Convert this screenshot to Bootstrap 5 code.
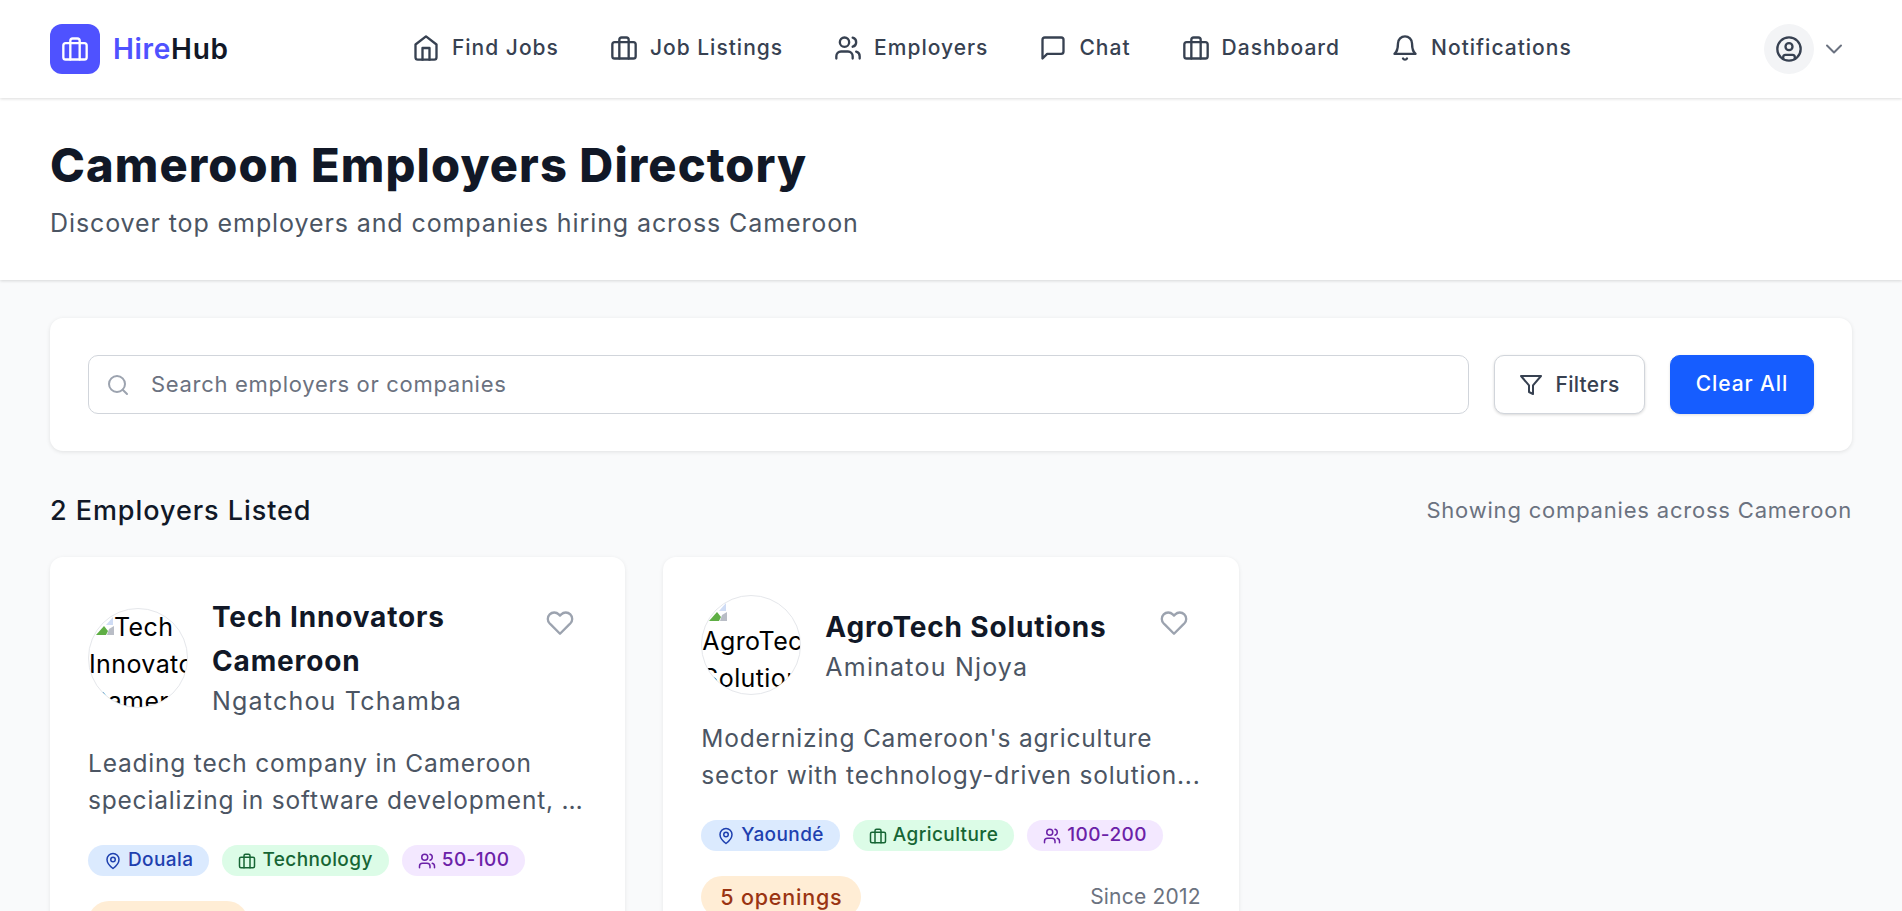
<!DOCTYPE html>
<html lang="en">
<head>
<meta charset="utf-8">
<title>HireHub - Cameroon Employers Directory</title>
<link href="https://cdn.jsdelivr.net/npm/bootstrap@5.3.0/dist/css/bootstrap.min.css" rel="stylesheet">
<style>
html,body{height:911px;overflow:hidden}
body{background:#f9fafb;font-family:Inter,"Noto Sans",sans-serif;color:#111827}
svg.ico{fill:none;stroke:currentColor;stroke-width:2;stroke-linecap:round;stroke-linejoin:round;flex:none;display:block}
.topbar{height:98px;background:#fff;padding:0 50px;box-shadow:0 1px 3px rgba(0,0,0,.14);position:relative;z-index:2}
.brand-link{gap:13px}
.logo-box{width:50px;height:50px;border-radius:12px;background:#4f52ff;color:#fff}
.logo-name{font-size:28px;font-weight:600;letter-spacing:.7px;color:#111827}
.logo-name span{color:#4f52ff}
.nav-links{gap:51px;margin-right:9px}
.nav-entry{font-size:21px;font-weight:500;color:#374151;gap:12px;text-decoration:none;letter-spacing:1px;position:relative;top:-1px}
.user-side{gap:6px;padding-right:4px}
.user-dot{width:50px;height:50px;background:#f3f4f6;color:#374151}
.user-chev{color:#6b7280;stroke-width:1.7!important}
.hero{height:182px;background:#fff;padding:38px 50px 0;box-shadow:0 1px 3px rgba(0,0,0,.14);position:relative;z-index:1}
.hero h1{font-size:47px;font-weight:800;line-height:58px;margin:0 0 11px;letter-spacing:1.1px;color:#111827}
.hero p{font-size:25px;line-height:36px;margin:0;color:#4b5563;letter-spacing:.9px}
.content{padding:38px 50px 0}
.search-panel{background:#fff;border-radius:13px;padding:37px 38px;box-shadow:0 1px 4px rgba(0,0,0,.1);gap:25px}
.search-box{position:relative;flex:1}
.search-box svg{position:absolute;left:18px;top:18px;color:#9ca3af}
.search-box .form-control{height:59px;padding:0 12px 2px 62px;font-size:22px;letter-spacing:.7px;border-color:#d1d5db;border-radius:10px;color:#111827}
.search-box .form-control::placeholder{color:#6b7280;opacity:1}
.btn-filter,.btn-clear{height:59px;border-radius:10px;font-size:21px;font-weight:500;display:flex;align-items:center}
.btn-filter{width:151px;justify-content:center;gap:12px;background:#fff;border:1px solid #d1d5db;color:#374151;box-shadow:0 1px 3px rgba(0,0,0,.16);letter-spacing:.3px}
.btn-clear{width:144px;justify-content:center;padding-bottom:8px;background:#165dff;border:1px solid #165dff;color:#fff;box-shadow:0 1px 3px rgba(0,0,0,.12);letter-spacing:.9px}
.list-head{margin:38px 0 26px;height:42px}
.list-head h2{font-size:27px;font-weight:500;margin:0;padding-top:2px;color:#111827;letter-spacing:.94px}
.list-head span{font-size:22px;color:#6b7280;letter-spacing:.8px}
.emp-grid{--bs-gutter-x:38px}
.emp-card{background:#fff;border:0;border-radius:13px;padding:38px;box-shadow:0 1px 4px rgba(0,0,0,.08);height:600px}
.emp-top{gap:24px}
.avatar-ring{width:100px;height:100px;border-radius:50%;border:1px solid #e5e7eb;overflow:hidden;flex:none;font-size:25px;line-height:37px;color:#000;background:#fff;letter-spacing:.4px}
.avatar-ring div{white-space:nowrap}
.broken-pic{display:inline-block;vertical-align:1px;margin-left:7px}
.broken-solo{height:27px;padding-top:7px;line-height:0}
.emp-title{font-size:28px;font-weight:700;line-height:44px;margin:0;color:#111827;letter-spacing:.85px}
.emp-owner{font-size:25px;line-height:37px;color:#4b5563;letter-spacing:1.2px}
.heart-btn{padding:14px 13px;border:0;background:none;color:#9ca3af;align-self:flex-start;line-height:0}
.emp-desc{font-size:24.5px;line-height:37px;color:#4b5563;margin:25px 0 26px;white-space:nowrap;letter-spacing:.8px}
.tags{gap:13px;margin-bottom:25px}
.pill{height:31px;border-radius:16px;padding:0 16px;font-size:19px;font-weight:500;gap:6px;letter-spacing:.4px}
.pill-blue{background:#dbeafe;color:#1e40af}
.pill-green{background:#dcfce7;color:#166534}
.pill-purple{background:#f3e8ff;color:#6b21a8}
.pill-open{height:42px;border-radius:21px;padding:0 19px;background:#ffedd5;color:#9a3412;font-size:21.5px;font-weight:500;letter-spacing:.8px}
.since{font-size:21px;color:#6b7280;letter-spacing:.2px}
</style>
</head>
<body>
<svg width="0" height="0" class="position-absolute">
<defs>
<symbol id="i-brief" viewBox="0 0 24 24"><rect x="2" y="7" width="20" height="14" rx="2"/><path d="M16 21V5a2 2 0 0 0-2-2h-4a2 2 0 0 0-2 2v16"/></symbol>
<symbol id="i-home" viewBox="0 0 24 24"><path d="M3 9l9-7 9 7v11a2 2 0 0 1-2 2H5a2 2 0 0 1-2-2z"/><path d="M9 22V12h6v10"/></symbol>
<symbol id="i-users" viewBox="0 0 24 24"><path d="M16 21v-2a4 4 0 0 0-4-4H6a4 4 0 0 0-4 4v2"/><circle cx="9" cy="7" r="4"/><path d="M22 21v-2a4 4 0 0 0-3-3.87"/><path d="M16 3.13a4 4 0 0 1 0 7.75"/></symbol>
<symbol id="i-chat" viewBox="0 0 24 24"><path d="M21 15a2 2 0 0 1-2 2H7l-4 4V5a2 2 0 0 1 2-2h14a2 2 0 0 1 2 2z"/></symbol>
<symbol id="i-bell" viewBox="0 0 24 24"><path d="M6 8a6 6 0 0 1 12 0c0 7 3 9 3 9H3s3-2 3-9"/><path d="M10.3 21a1.94 1.94 0 0 0 3.4 0"/></symbol>
<symbol id="i-user" viewBox="0 0 24 24"><circle cx="12" cy="12" r="10"/><circle cx="12" cy="10" r="3"/><path d="M7 20.662V19a2 2 0 0 1 2-2h6a2 2 0 0 1 2 2v1.662"/></symbol>
<symbol id="i-chev" viewBox="0 0 24 24"><path d="m6 9 6 6 6-6"/></symbol>
<symbol id="i-search" viewBox="0 0 24 24"><circle cx="11" cy="11" r="8"/><path d="m21 21-4.3-4.3"/></symbol>
<symbol id="i-filter" viewBox="0 0 24 24"><path d="M22 3H2l8 9.46V19l4 2v-8.54z"/></symbol>
<symbol id="i-heart" viewBox="0 0 24 24"><path d="M20.84 4.61a5.5 5.5 0 0 0-7.78 0L12 5.67l-1.06-1.06a5.5 5.5 0 0 0-7.78 7.78l1.06 1.06L12 21.23l7.78-7.78 1.06-1.06a5.5 5.5 0 0 0 0-7.78z"/></symbol>
<symbol id="i-pin" viewBox="0 0 24 24"><path d="M20 10c0 6-8 12-8 12s-8-6-8-12a8 8 0 0 1 16 0Z"/><circle cx="12" cy="10" r="3"/></symbol>
<symbol id="i-broken" viewBox="0 0 18 18"><path d="M10 8 17 0v8z" fill="#cfdcf5"/><path d="M0 18 8 9l4 5-2 4z" fill="#5fae45"/><path d="M11 18l2-6 5-3v9z" fill="#b9bdc6"/></symbol>
</defs>
</svg>

<nav class="navbar topbar d-flex align-items-center justify-content-between flex-nowrap">
  <a class="brand-link d-flex align-items-center text-decoration-none" href="#">
    <span class="logo-box d-flex align-items-center justify-content-center"><svg class="ico" width="28" height="28"><use href="#i-brief"/></svg></span>
    <span class="logo-name"><span>Hire</span>Hub</span>
  </a>
  <div class="nav-links d-flex align-items-center">
    <a class="nav-entry d-flex align-items-center" href="#"><svg class="ico" width="28" height="28"><use href="#i-home"/></svg>Find Jobs</a>
    <a class="nav-entry d-flex align-items-center" href="#"><svg class="ico" width="28" height="28"><use href="#i-brief"/></svg>Job Listings</a>
    <a class="nav-entry d-flex align-items-center" href="#"><svg class="ico" width="28" height="28"><use href="#i-users"/></svg>Employers</a>
    <a class="nav-entry d-flex align-items-center" href="#"><svg class="ico" width="28" height="28"><use href="#i-chat"/></svg>Chat</a>
    <a class="nav-entry d-flex align-items-center" href="#"><svg class="ico" width="28" height="28"><use href="#i-brief"/></svg>Dashboard</a>
    <a class="nav-entry d-flex align-items-center" href="#"><svg class="ico" width="28" height="28"><use href="#i-bell"/></svg>Notifications</a>
  </div>
  <div class="user-side d-flex align-items-center">
    <span class="user-dot rounded-circle d-flex align-items-center justify-content-center"><svg class="ico" width="28" height="28"><use href="#i-user"/></svg></span>
    <svg class="ico user-chev" width="28" height="28"><use href="#i-chev"/></svg>
  </div>
</nav>

<header class="hero">
  <h1>Cameroon Employers Directory</h1>
  <p>Discover top employers and companies hiring across Cameroon</p>
</header>

<main class="content">
  <section class="search-panel d-flex align-items-center">
    <div class="search-box">
      <svg class="ico" width="24" height="24"><use href="#i-search"/></svg>
      <input class="form-control" type="text" placeholder="Search employers or companies">
    </div>
    <button class="btn btn-filter" type="button"><svg class="ico" width="24" height="24"><use href="#i-filter"/></svg>Filters</button>
    <button class="btn btn-clear" type="button">Clear All</button>
  </section>

  <div class="list-head d-flex align-items-center justify-content-between">
    <h2>2 Employers Listed</h2>
    <span>Showing companies across Cameroon</span>
  </div>

  <div class="row emp-grid">
    <div class="col-4">
      <article class="card emp-card">
        <div class="emp-top d-flex align-items-center">
          <div class="avatar-ring"><div><svg class="broken-pic" width="18" height="18"><use href="#i-broken"/></svg>Tech</div><div>Innovators</div><div>Cameroon</div></div>
          <div class="flex-grow-1">
            <h3 class="emp-title">Tech Innovators Cameroon</h3>
            <div class="emp-owner">Ngatchou Tchamba</div>
          </div>
          <button class="heart-btn" type="button" aria-label="Save"><svg class="ico" width="28" height="28"><use href="#i-heart"/></svg></button>
        </div>
        <p class="emp-desc">Leading tech company in Cameroon<br>specializing in software development, …</p>
        <div class="tags d-flex flex-wrap">
          <span class="pill pill-blue d-flex align-items-center"><svg class="ico" width="18" height="18"><use href="#i-pin"/></svg>Douala</span>
          <span class="pill pill-green d-flex align-items-center"><svg class="ico" width="18" height="18"><use href="#i-brief"/></svg>Technology</span>
          <span class="pill pill-purple d-flex align-items-center"><svg class="ico" width="18" height="18"><use href="#i-users"/></svg>50-100</span>
        </div>
        <div class="d-flex align-items-center justify-content-between">
          <span class="pill-open d-flex align-items-center">8 openings</span>
          <span class="since">Since 2015</span>
        </div>
      </article>
    </div>
    <div class="col-4">
      <article class="card emp-card">
        <div class="emp-top d-flex align-items-center">
          <div class="avatar-ring"><div class="broken-solo"><svg class="broken-pic" width="18" height="18"><use href="#i-broken"/></svg></div><div>AgroTech</div><div>Solutions</div></div>
          <div class="flex-grow-1">
            <h3 class="emp-title">AgroTech Solutions</h3>
            <div class="emp-owner">Aminatou Njoya</div>
          </div>
          <button class="heart-btn" type="button" aria-label="Save"><svg class="ico" width="28" height="28"><use href="#i-heart"/></svg></button>
        </div>
        <p class="emp-desc">Modernizing Cameroon's agriculture<br>sector with technology-driven solution...</p>
        <div class="tags d-flex flex-wrap">
          <span class="pill pill-blue d-flex align-items-center"><svg class="ico" width="18" height="18"><use href="#i-pin"/></svg>Yaoundé</span>
          <span class="pill pill-green d-flex align-items-center"><svg class="ico" width="18" height="18"><use href="#i-brief"/></svg>Agriculture</span>
          <span class="pill pill-purple d-flex align-items-center"><svg class="ico" width="18" height="18"><use href="#i-users"/></svg>100-200</span>
        </div>
        <div class="d-flex align-items-center justify-content-between">
          <span class="pill-open d-flex align-items-center">5 openings</span>
          <span class="since">Since 2012</span>
        </div>
      </article>
    </div>
  </div>
</main>
</body>
</html>
